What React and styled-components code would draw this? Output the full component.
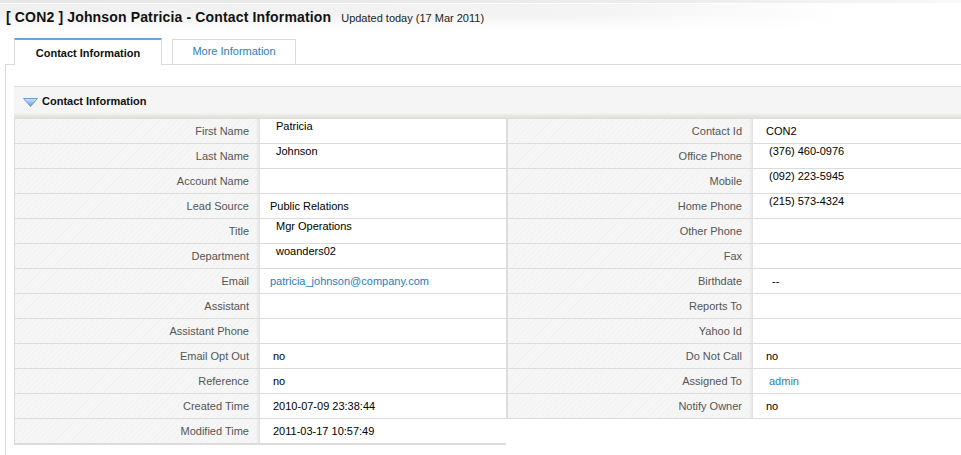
import React from 'react'
import styled, { createGlobalStyle } from 'styled-components'

const GlobalStyle = createGlobalStyle`
    body {
        margin: 0;
        background: #fff;
        font-family: "Liberation Sans", Arial, sans-serif;
        overflow: hidden;
    }
`

const Page = styled.div`
    width: 961px;
    height: 455px;
    overflow: hidden;
`

const TopStrip = styled.div`
    height: 3px;
    background: linear-gradient(to right, #e6e6e6 0%, #ececec 70%, #f8f8f8 100%);
    border-bottom: 1px solid #fff;
`

const Header = styled.div`
    display: flex;
    align-items: baseline;
    height: 27px;
    padding: 0 0 0 6px;
    box-sizing: border-box;
    background:
        linear-gradient(to bottom, rgba(255,255,255,0) 0%, rgba(255,255,255,0) 35%, #fff 100%),
        linear-gradient(to right, #f0f0f0 0%, #f3f3f3 60%, #fff 88%);
`

const Title = styled.h1`
    margin: 0;
    font-size: 14px;
    font-weight: bold;
    letter-spacing: 0.15px;
    color: #111;
    line-height: 26px;
`

const Updated = styled.span`
    margin-left: 10px;
    font-size: 11px;
    color: #222;
`

const Workspace = styled.div`
    margin: 7px 0 0 5px;
`

const TabBar = styled.div`
    display: flex;
    align-items: flex-end;
    gap: 9px;
    height: 26px;
    padding-left: 9px;
    border-bottom: 1px solid #d9d9d9;
`

const Tab = styled.div`
    display: flex;
    align-items: center;
    justify-content: center;
    box-sizing: border-box;
    background: #fff;
    border: 1px solid #d9d9d9;
    border-bottom: none;
    font-size: 11px;
    ${(p) => p.$active ? `
        width: 148px;
        height: 27px;
        margin-bottom: -1px;
        border-top: 2px solid #6aa6dc;
        font-weight: bold;
        color: #111;
    ` : `
        width: 124px;
        height: 25px;
        padding-bottom: 2px;
        margin-left: 1px;
        color: #2a7cc8;
    `}
`

const Content = styled.div`
    border-left: 1px solid #d9d9d9;
    padding: 21px 0 20px 8px;
`

const BlockHeader = styled.div`
    display: flex;
    align-items: center;
    gap: 4px;
    height: 33px;
    padding: 0 0 5px 9px;
    box-sizing: border-box;
    border-top: 1px solid #dedede;
    background: linear-gradient(to bottom, #f5f5f5 0%, #f5f5f5 80%, #e9e9e6 88%, #dcdcd8 100%);
    font-size: 11px;
    font-weight: bold;
    color: #111;
    width: 960px;
`

const Columns = styled.div`
    display: flex;
    align-items: flex-start;
    width: 1000px;
`

const Table = styled.div`
    display: grid;
    grid-template-columns: ${(p) => p.$cols};
    border: 1px solid #dcdcdc;
    border-top: none;
    ${(p) => p.$right && `
        border-left: 2px solid #dcdcdc;
        border-right: none;
        border-bottom: none;
    `}
    ${(p) => p.$left && `border-right: none;`}
`

const Label = styled.div`
    height: 25px;
    box-sizing: border-box;
    border-bottom: 1px solid #dcdcdc;
    padding-right: 11px;
    display: flex;
    align-items: center;
    justify-content: flex-end;
    font-size: 11px;
    color: #555;
    background:
        linear-gradient(to right, rgba(0,0,0,0) calc(100% - 4px), #e6e6e6 calc(100% - 1px), #dedede 100%),
        repeating-linear-gradient(135deg, #f6f6f6 0px, #f6f6f6 3px, #f2f2f2 3px, #f2f2f2 4px);
`

const Value = styled.div`
    height: 25px;
    box-sizing: border-box;
    border-bottom: 1px solid #dcdcdc;
    border-right: ${(p) => p.$edge ? '1px solid #dcdcdc' : 'none'};
    padding-left: ${(p) => p.$pad}px;
    padding-top: ${(p) => p.$top ? '1px' : '0'};
    display: flex;
    align-items: ${(p) => p.$top ? 'flex-start' : 'center'};
    font-size: 11px;
    color: ${(p) => p.$link ? '#2a7cc8' : '#000'};
    background: #fff;
`

const Triangle = () => (
    <svg width="15" height="9" viewBox="0 0 15 9" style={{ marginTop: 3 }}>
        <defs>
            <linearGradient id="tri" x1="0" y1="0" x2="0" y2="1">
                <stop offset="0" stopColor="#cfe6fb" />
                <stop offset="1" stopColor="#5a9fe0" />
            </linearGradient>
        </defs>
        <polygon points="0.5,0.5 14.5,0.5 7.5,8.5" fill="url(#tri)" stroke="#4d8fd0" strokeWidth="0.8" />
    </svg>
)

const leftRows = [
    { label: 'First Name', value: 'Patricia', pad: 16, top: true },
    { label: 'Last Name', value: 'Johnson', pad: 16, top: true },
    { label: 'Account Name', value: '' },
    { label: 'Lead Source', value: 'Public Relations', pad: 10 },
    { label: 'Title', value: 'Mgr Operations', pad: 16, top: true },
    { label: 'Department', value: 'woanders02', pad: 16, top: true },
    { label: 'Email', value: 'patricia_johnson@company.com', pad: 10, link: true },
    { label: 'Assistant', value: '' },
    { label: 'Assistant Phone', value: '' },
    { label: 'Email Opt Out', value: 'no', pad: 13 },
    { label: 'Reference', value: 'no', pad: 13 },
    { label: 'Created Time', value: '2010-07-09 23:38:44', pad: 13 },
    { label: 'Modified Time', value: '2011-03-17 10:57:49', pad: 13 },
]

const rightRows = [
    { label: 'Contact Id', value: 'CON2', pad: 13 },
    { label: 'Office Phone', value: '(376) 460-0976', pad: 16, top: true },
    { label: 'Mobile', value: '(092) 223-5945', pad: 16, top: true },
    { label: 'Home Phone', value: '(215) 573-4324', pad: 16, top: true },
    { label: 'Other Phone', value: '' },
    { label: 'Fax', value: '' },
    { label: 'Birthdate', value: '--', pad: 19 },
    { label: 'Reports To', value: '' },
    { label: 'Yahoo Id', value: '' },
    { label: 'Do Not Call', value: 'no', pad: 13 },
    { label: 'Assigned To', value: 'admin', pad: 16, link: true },
    { label: 'Notify Owner', value: 'no', pad: 13 },
]

const FieldRows = ({ rows, edge }) => rows.map((r) => (
    <React.Fragment key={r.label}>
        <Label>{r.label}</Label>
        <Value $pad={r.pad || 10} $top={r.top} $link={r.link} $edge={edge}>{r.value}</Value>
    </React.Fragment>
))

const App = () => {
    return (
        <Page>
            <GlobalStyle />
            <TopStrip />
            <Header>
                <Title>[ CON2 ] Johnson Patricia - Contact Information</Title>
                <Updated>Updated today (17 Mar 2011)</Updated>
            </Header>
            <Workspace>
                <TabBar>
                    <Tab $active>Contact Information</Tab>
                    <Tab>More Information</Tab>
                </TabBar>
                <Content>
                    <BlockHeader>
                        <Triangle />
                        Contact Information
                    </BlockHeader>
                    <Columns>
                        <Table $left $cols="245px 246px">
                            <FieldRows rows={leftRows} />
                        </Table>
                        <Table $right $cols="245px 250px">
                            <FieldRows rows={rightRows} />
                        </Table>
                    </Columns>
                </Content>
            </Workspace>
        </Page>
    )
}

export default App
